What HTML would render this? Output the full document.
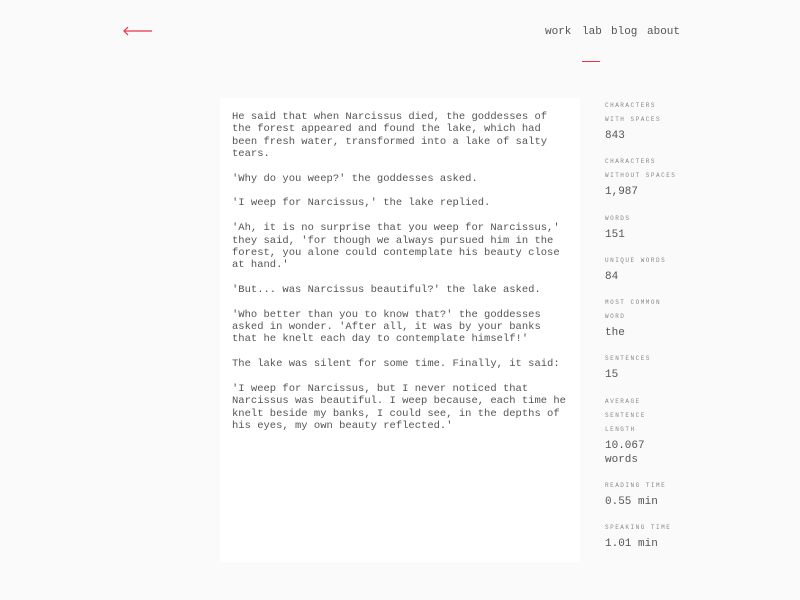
<!DOCTYPE html>
<html><head><style>
body{margin:0;width:800px;height:600px;background:#fafafa;font-family:"Liberation Mono",monospace;color:#444;position:relative;overflow:hidden}
.nav{position:absolute;top:26px;font-size:11px;color:#555}
.box{position:absolute;left:220px;top:98px;width:360px;height:464px;background:#fff}
.txt{position:absolute;left:232px;top:111px;width:340px;font-size:10.5px;line-height:12.3px;color:#555}
.txt p{margin:0 0 12.5px 0}
.st{position:absolute;left:605px;color:#666}
.l{font-size:6px;letter-spacing:1.5px;text-transform:uppercase;color:#888;line-height:14px}
.v{font-size:11px;line-height:14px;color:#555;margin-top:2px}
.v+.v{margin-top:0}
</style></head><body>
<svg style="position:absolute;left:122px;top:25px" width="32" height="12"><line x1="2" y1="6" x2="30" y2="6" stroke="#e8344a" stroke-width="1.2"/><polyline points="6,2 2,6 6,10" fill="none" stroke="#e8344a" stroke-width="1.2"/></svg>
<div class="nav" style="left:545px">work</div>
<div class="nav" style="left:582px">lab</div>
<div class="nav" style="left:611px">blog</div>
<div class="nav" style="left:647px">about</div>
<div style="position:absolute;left:582px;top:61px;width:18px;height:1px;background:#e8344a"></div>
<div class="box"></div>
<div class="txt">
<p>He said that when Narcissus died, the goddesses of the forest appeared and found the lake, which had been fresh water, transformed into a lake of salty tears.</p>
<p>'Why do you weep?' the goddesses asked.</p>
<p>'I weep for Narcissus,' the lake replied.</p>
<p>'Ah, it is no surprise that you weep for Narcissus,' they said, 'for though we always pursued him in the forest, you alone could contemplate his beauty close at hand.'</p>
<p>'But... was Narcissus beautiful?' the lake asked.</p>
<p>'Who better than you to know that?' the goddesses asked in wonder. 'After all, it was by your banks that he knelt each day to contemplate himself!'</p>
<p>The lake was silent for some time. Finally, it said:</p>
<p>'I weep for Narcissus, but I never noticed that Narcissus was beautiful. I weep because, each time he knelt beside my banks, I could see, in the depths of his eyes, my own beauty reflected.'</p>
</div>
<div class="st" style="top:99px"><div class="l">Characters</div><div class="l">with spaces</div><div class="v">843</div></div>
<div class="st" style="top:155px"><div class="l">Characters</div><div class="l">without spaces</div><div class="v">1,987</div></div>
<div class="st" style="top:212px"><div class="l">Words</div><div class="v">151</div></div>
<div class="st" style="top:254px"><div class="l">Unique words</div><div class="v">84</div></div>
<div class="st" style="top:296px"><div class="l">Most common</div><div class="l">word</div><div class="v">the</div></div>
<div class="st" style="top:352px"><div class="l">Sentences</div><div class="v">15</div></div>
<div class="st" style="top:395px"><div class="l">Average</div><div class="l">sentence</div><div class="l">length</div><div class="v">10.067</div><div class="v">words</div></div>
<div class="st" style="top:479px"><div class="l">Reading time</div><div class="v">0.55 min</div></div>
<div class="st" style="top:521px"><div class="l">Speaking time</div><div class="v">1.01 min</div></div>
</body></html>
